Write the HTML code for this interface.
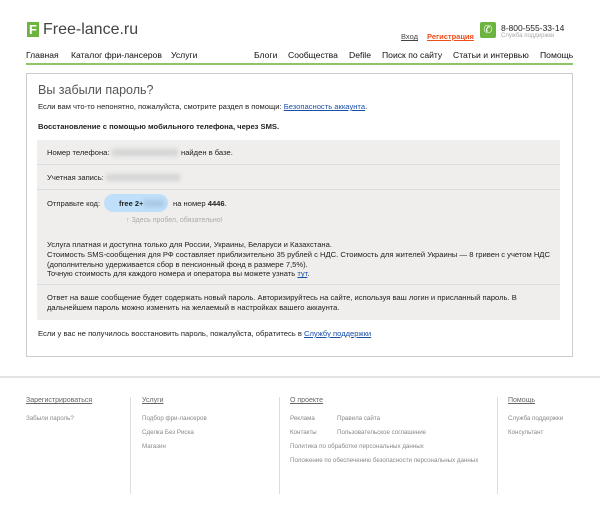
<!DOCTYPE html>
<html><head><meta charset="utf-8"><style>
*{margin:0;padding:0;box-sizing:border-box}
body{width:600px;height:514px;background:#fff;font-family:"Liberation Sans",Arial,sans-serif;color:#222;position:relative;overflow:hidden}
.a{position:absolute;white-space:nowrap}
a{color:#1a4fa8}
.nav{font-size:8.6px;color:#111;top:50px}
.s8{font-size:7.6px}
.f{font-size:6.2px;color:#888}
.fh{font-size:7px;color:#666;text-decoration:underline}
.blur{position:absolute;background:#d4d4d4;filter:blur(2px);height:7px}
</style></head><body>
<div class="a" style="left:27px;top:22px;width:12px;height:15px;background:#6cb33f"></div>
<div class="a" style="left:29px;top:24px;color:#fff;font-size:13px;font-weight:bold;line-height:12px">F</div>
<div class="a" style="left:43px;top:21px;font-size:16px;color:#444">Free-lance.ru</div>
<div class="a" style="left:401px;top:32px;font-size:7.5px;color:#444;text-decoration:underline">Вход</div>
<div class="a" style="left:427px;top:32px;font-size:7.5px;color:#f04d1d;font-weight:bold;text-decoration:underline">Регистрация</div>
<div class="a" style="left:480px;top:22px;width:16px;height:16px;background:#6cb33f;border-radius:2px;color:#fff;font-size:11px;text-align:center;line-height:16px">✆</div>
<div class="a" style="left:501px;top:23px;font-size:8.5px;color:#222">8-800-555-33-14</div>
<div class="a" style="left:501px;top:33px;font-size:6px;color:#aaa">Служба поддержки</div>
<div class="a nav" style="left:26px">Главная</div>
<div class="a nav" style="left:71px">Каталог фри-лансеров</div>
<div class="a nav" style="left:171px">Услуги</div>
<div class="a nav" style="left:254px">Блоги</div>
<div class="a nav" style="left:288px">Сообщества</div>
<div class="a nav" style="left:349px">Defile</div>
<div class="a nav" style="left:382px">Поиск по сайту</div>
<div class="a nav" style="left:453px">Статьи и интервью</div>
<div class="a nav" style="left:540px">Помощь</div>
<div class="a" style="left:26px;top:63px;width:547px;height:2px;background:#8cc56a"></div>
<div class="a" style="left:26px;top:73px;width:547px;height:284px;border:1px solid #ccc"></div>
<div class="a" style="left:38px;top:83px;font-size:12.5px;color:#555">Вы забыли пароль?</div>
<div class="a s8" style="left:38px;top:102px">Если вам что-то непонятно, пожалуйста, смотрите раздел в помощи: <a href="#">Безопасность аккаунта</a>.</div>
<div class="a s8" style="left:38px;top:122px;font-weight:bold">Восстановление с помощью мобильного телефона, через SMS.</div>
<div class="a" style="left:37px;top:140px;width:523px;height:180px;background:#efeeec;border-radius:2px"></div>
<div class="a" style="left:37px;top:164px;width:523px;height:1px;background:#dcdcdc"></div>
<div class="a" style="left:37px;top:189px;width:523px;height:1px;background:#dcdcdc"></div>
<div class="a" style="left:37px;top:284px;width:523px;height:1px;background:#dcdcdc"></div>
<div class="a s8" style="left:47px;top:148px">Номер телефона:</div>
<div class="blur" style="left:112px;top:149px;width:66px"></div>
<div class="a s8" style="left:181px;top:148px">найден в базе.</div>
<div class="a s8" style="left:47px;top:173px">Учетная запись:</div>
<div class="blur" style="left:106px;top:174px;width:74px"></div>
<div class="a s8" style="left:47px;top:199px">Отправьте код:</div>
<div class="a" style="left:104px;top:194px;width:64px;height:18px;background:#bfdffa;border-radius:9px"></div>
<div class="a" style="left:119px;top:199px;font-size:7.5px;font-weight:bold">free 2+</div>
<div class="blur" style="left:144px;top:200px;width:20px;background:#a8c8e4"></div>
<div class="a s8" style="left:173px;top:199px">на номер <b>4446</b>.</div>
<div class="a" style="left:126px;top:217px;font-size:7px;color:#aaa">↑ Здесь пробел, обязательно!</div>
<div class="a s8" style="left:47px;top:240px;line-height:9.8px">Услуга платная и доступна только для России, Украины, Беларуси и Казахстана.<br>Стоимость SMS-сообщения для РФ составляет приблизительно 35 рублей с НДС. Стоимость для жителей Украины — 8 гривен с учетом НДС<br>(дополнительно удерживается сбор в пенсионный фонд в размере 7,5%).<br>Точную стоимость для каждого номера и оператора вы можете узнать <a href="#">тут</a>.</div>
<div class="a s8" style="left:47px;top:293px;line-height:10px">Ответ на ваше сообщение будет содержать новый пароль. Авторизируйтесь на сайте, используя ваш логин и присланный пароль. В<br>дальнейшем пароль можно изменить на желаемый в настройках вашего аккаунта.</div>
<div class="a s8" style="left:38px;top:329px">Если у вас не получилось восстановить пароль, пожалуйста, обратитесь в <a href="#">Службу поддержки</a></div>
<div class="a" style="left:0;top:376px;width:600px;height:2px;background:#e4e4e4"></div>
<div class="a" style="left:130px;top:397px;width:1px;height:97px;background:#ddd"></div>
<div class="a" style="left:279px;top:397px;width:1px;height:97px;background:#ddd"></div>
<div class="a" style="left:497px;top:397px;width:1px;height:97px;background:#ddd"></div>
<div class="a fh" style="left:26px;top:397px">Зарегистрироваться</div>
<div class="a f" style="left:26px;top:415px">Забыли пароль?</div>
<div class="a fh" style="left:142px;top:397px">Услуги</div>
<div class="a f" style="left:142px;top:415px">Подбор фри-лансеров</div>
<div class="a f" style="left:142px;top:429px">Сделка Без Риска</div>
<div class="a f" style="left:142px;top:443px">Магазин</div>
<div class="a fh" style="left:290px;top:397px">О проекте</div>
<div class="a f" style="left:290px;top:415px">Реклама</div>
<div class="a f" style="left:337px;top:415px">Правила сайта</div>
<div class="a f" style="left:290px;top:429px">Контакты</div>
<div class="a f" style="left:337px;top:429px">Пользовательское соглашение</div>
<div class="a f" style="left:290px;top:443px">Политика по обработке персональных данных</div>
<div class="a f" style="left:290px;top:457px">Положение по обеспечению безопасности персональных данных</div>
<div class="a fh" style="left:508px;top:397px">Помощь</div>
<div class="a f" style="left:508px;top:415px">Служба поддержки</div>
<div class="a f" style="left:508px;top:429px">Консультант</div>
</body></html>
